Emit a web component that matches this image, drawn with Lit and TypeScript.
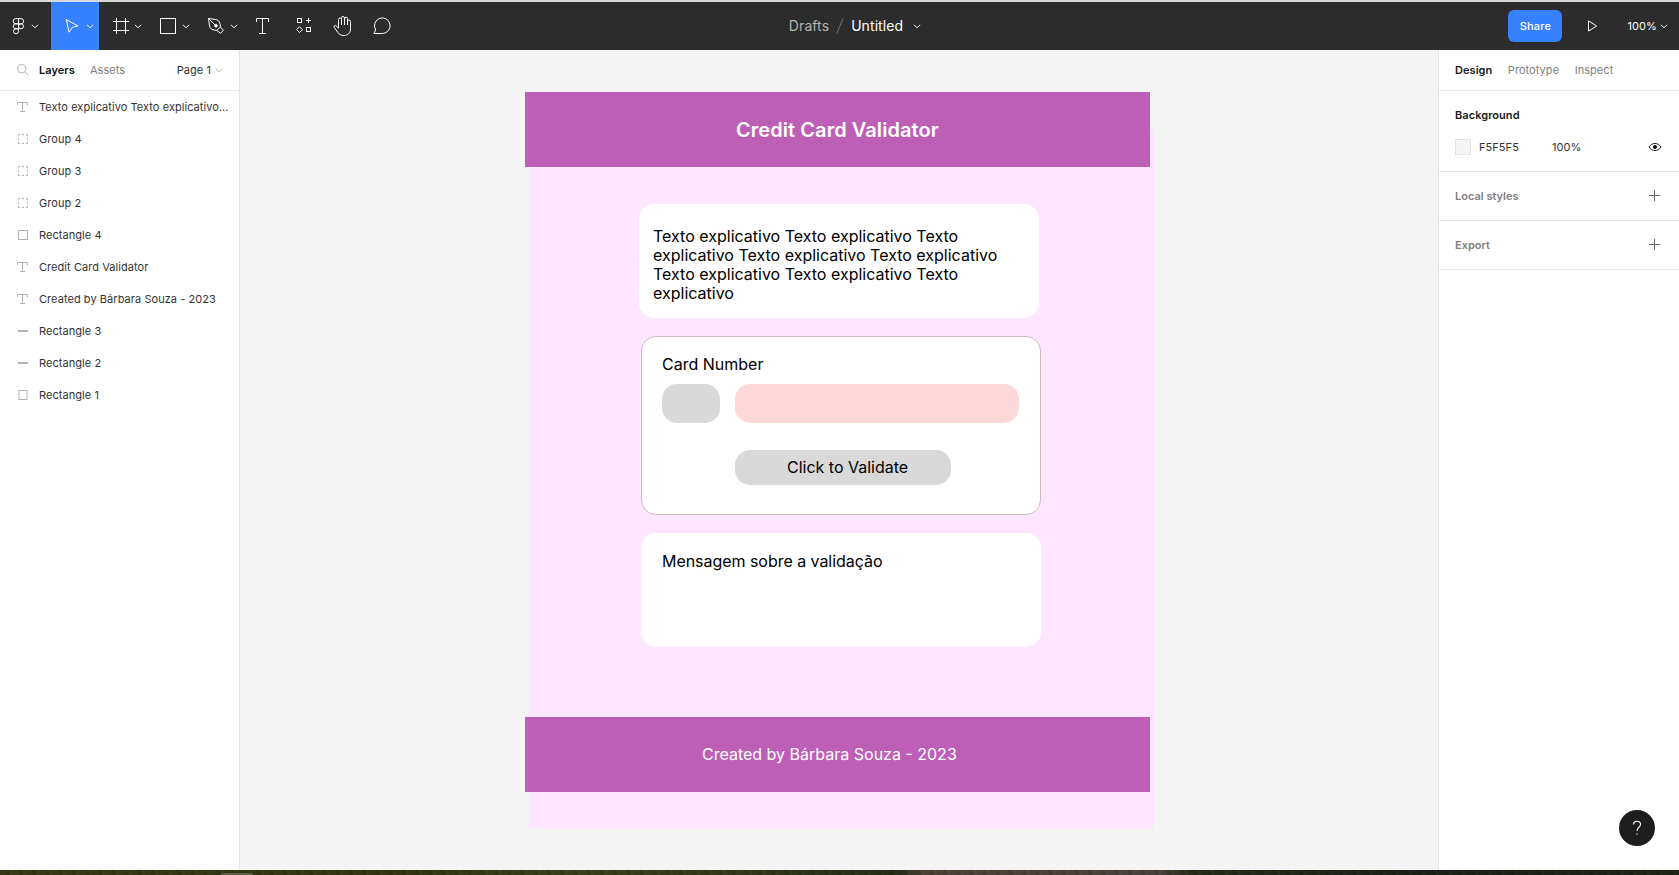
import { LitElement, html, css, svg } from "lit";
import { customElement } from "lit/decorators.js";

const chevron = (cx: number, cy = 26) =>
  svg`<path d="M${cx - 3} ${cy - 1.2}l3 3 3-3" />`;

/* Toolbar glyphs share one coordinate space; each tool shows its own slice of it. */
const TOOLS = [
  { x: 0, w: 51, name: "menu", art: svg`
    <path d="M18.5 18.6h-2.7a2.6 2.6 0 0 0 0 5.2h2.7zM18.5 18.6h2.5a2.6 2.6 0 0 1 0 5.2h-2.5zM18.5 23.8h-2.7a2.5 2.5 0 0 0 0 5h2.7zM18.5 28.8h-2.7a2.5 2.5 0 1 0 2.7 2.5z" />
    <circle cx="21" cy="26.3" r="2.5" />${chevron(35)}` },
  { x: 51, w: 48, name: "move", art: svg`
    <path d="M66.3 19.7l11.8 6.2-5.6 1.4-3.4 4.9z" />${chevron(90)}` },
  { x: 99, w: 48, name: "frame", art: svg`
    <path d="M116.5 18v16M125.5 18v16M113 21.5h16M113 30.5h16" />${chevron(138)}` },
  { x: 147, w: 48, name: "rectangle", art: svg`
    <rect x="160.5" y="18.5" width="15" height="15" />${chevron(186)}` },
  { x: 195, w: 48, name: "pen", art: svg`
    <path d="M208.5 18.5l8.3 1.2c2.4.7 3.4 3.3 3.7 7l-3.7 3.7c-3.9-.3-6.4-1.3-7.1-3.700zM208.500 18.500l6.500 6.500M220.300 27l3 3.200-2.700 3.200-3.700-2.900" />
    <circle cx="216" cy="25.800" r="1.300" fill="#fff" />${chevron(234)}` },
  { x: 243, w: 40, name: "text", art: svg`
    <path d="M256.500 22v-3.500h12V22M262.500 18.500v15M259 33.500h7" />` },
  { x: 283, w: 40, name: "resources", art: svg`
    <rect x="297.500" y="18.500" width="4" height="4" /><rect x="306.500" y="27.500" width="4" height="4" />
    <path d="M308.500 18v5M306 20.500h5M299.500 26.700l2.900 2.900-2.900 2.900-2.900-2.900z" />` },
  { x: 323, w: 40, name: "hand", art: svg`
    <path d="M341.500 25v-7a1.500 1.500 0 0 1 3 0v7M344.500 18.700a1.500 1.500 0 0 1 3 0V25M347.500 21.500a1.500 1.500 0 0 1 3 0v7.300c0 4-2.700 6.700-6.500 6.700-2.700 0-4.700-.9-6.200-3l-3.500-5.200c-.8-1.300.7-2.400 1.900-1.400l2.300 2.200v-8.600a1.500 1.500 0 0 1 3 0V25" />` },
  { x: 363, w: 40, name: "comment", art: svg`
    <path d="M373.900 33.500l1.800-3.600a7.800 7.800 0 1 1 7 3.600z" />` },
];

const LAYER_ICONS: Record<string, unknown> = {
  text: svg`<path d="M1.500 4V1.500h10V4M6.500 1.500v9M4 10.500h5" />`,
  group: svg`<path d="M2.500 3V1.500H4M10 1.500h1.500V3M11.500 9v1.500H10M4 10.500H2.500V9M6 1.500h2M6 10.500h2M2.500 5v2M11.500 5v2" />`,
  square: svg`<rect x="2.500" y="1.500" width="9" height="9" />`,
  tall: svg`<rect x="3" y="1.500" width="8" height="9" />`,
  line: svg`<path d="M2 6h10" stroke-width="2" />`,
};

const LAYERS: [string, string][] = [
  ["text", "Texto explicativo Texto explicativo..."],
  ["group", "Group 4"],
  ["group", "Group 3"],
  ["group", "Group 2"],
  ["square", "Rectangle 4"],
  ["text", "Credit Card Validator"],
  ["text", "Created by Bárbara Souza - 2023"],
  ["line", "Rectangle 3"],
  ["line", "Rectangle 2"],
  ["tall", "Rectangle 1"],
];

@customElement("tool-bar")
class ToolBar extends LitElement {
  static styles = css`
    :host { display: grid; grid-template-columns: 1fr auto 1fr; height: 48px; background: #2c2c2c; color: #fff; border-top: 2px solid #d5d9dc; }
    .tools { display: flex; }
    .active { background: #3681ff; }
    svg { fill: none; stroke: #fff; stroke-width: 1; display: block; }
    .name { display: flex; align-items: center; font-size: 14px; letter-spacing: .08px; padding: 0 0 1px 32px; }
    .drafts { color: #b3b3b3; }
    .slash { margin: 1px 7px 0 7px; stroke: #757575; }
    .chev { margin: 1px 0 0 9px; }
    .right { display: flex; align-items: center; justify-content: flex-end; font-size: 11px; }
    .share { width: 54px; height: 32px; border-radius: 6px; background: #3681ff; display: grid; place-items: center; font-weight: 500; letter-spacing: .15px; }
    .play { margin: 0 28px 0 25px; }
    .zoom { letter-spacing: .1px; margin-right: -2px; }
    .zoomchev { margin: 0 11px 0 5px; }
  `;
  render() {
    return html`
      <div class="tools">
        ${TOOLS.map((t) => html`<svg class=${t.name === "move" ? "active" : ""} width=${t.w} height="48" viewBox="${t.x} 2 ${t.w} 48">${t.art}</svg>`)}
      </div>
      <div class="name">
        <span class="drafts">Drafts</span>
        <svg class="slash" width="8" height="16" viewBox="0 0 8 16"><path d="M.8 15.500L7 .5" /></svg>
        <span>Untitled</span>
        <svg class="chev" width="10" height="8" viewBox="0 0 10 8">${chevron(5, 4)}</svg>
      </div>
      <div class="right">
        <div class="share">Share</div>
        <svg class="play" width="12" height="12" viewBox="0 0 12 12"><path d="M1.500 .9v10.200L9.600 6z" /></svg>
        <span class="zoom">100%</span>
        <svg class="zoomchev" width="8" height="8" viewBox="0 0 8 8">${chevron(4, 4)}</svg>
      </div>`;
  }
}

@customElement("layers-panel")
class LayersPanel extends LitElement {
  static styles = css`
    :host { display: flex; flex-direction: column; background: #fff; border-right: 1px solid #e5e5e5; color: #333; font-size: 11px; letter-spacing: .055px; min-width: 0; }
    .tabs { display: flex; align-items: center; height: 40px; border-bottom: 1px solid #e5e5e5; padding: 0 16px; }
    svg { fill: none; stroke: #b3b3b3; flex: none; display: block; }
    .search { margin: 0 10px 1px 1px; }
    .on { color: #111; font-weight: 600; margin-right: 15px; }
    .off { color: #808080; }
    .page { margin-left: auto; }
    .pchev { margin-left: 4px; }
    .row { display: flex; align-items: center; height: 32px; padding: 0 8px 0 16px; gap: 9px; }
    .label { white-space: nowrap; }
  `;
  render() {
    return html`
      <div class="tabs">
        <svg class="search" width="12" height="12" viewBox="0 0 12 12"><circle cx="4.700" cy="4.700" r="4.100" /><path d="M7.700 7.700l3.900 3.900" /></svg>
        <span class="on">Layers</span><span class="off">Assets</span>
        <span class="page">Page 1</span>
        <svg class="pchev" width="8" height="8" viewBox="0 0 8 8">${chevron(4, 4)}</svg>
      </div>
      ${LAYERS.map(([kind, label]) => html`
        <div class="row"><svg width="14" height="12" viewBox="0 0 14 12">${LAYER_ICONS[kind]}</svg><span class="label">${label}</span></div>`)}`;
  }
}

@customElement("design-panel")
class DesignPanel extends LitElement {
  static styles = css`
    :host { display: block; background: #fff; border-left: 1px solid #e5e5e5; color: #333; font-size: 11px; letter-spacing: .055px; }
    .tabs { display: flex; align-items: center; gap: 15.500px; height: 40px; padding-left: 16px; border-bottom: 1px solid #e5e5e5; color: #808080; }
    .on, .head { color: #1a1a1a; font-weight: 600; }
    .bg { height: 80px; border-bottom: 1px solid #e5e5e5; padding: 0 16px; display: grid; grid-template-rows: 48px 16px; align-items: center; }
    .fill { display: flex; align-items: center; }
    .swatch { width: 14px; height: 14px; border: 1px solid #e2e2e2; background: #f5f5f5; margin-right: 8px; }
    .hex { width: 73px; }
    .eye { margin-left: auto; margin-right: 1px; stroke: #1a1a1a; fill: none; }
    .section { display: flex; align-items: center; justify-content: space-between; height: 48px; padding: 0 19px 0 16px; border-bottom: 1px solid #e5e5e5; color: #808080; font-weight: 600; letter-spacing: 0; }
    .plus { stroke: #666; margin-bottom: 1px; }
  `;
  render() {
    return html`
      <div class="tabs"><span class="on">Design</span><span>Prototype</span><span>Inspect</span></div>
      <div class="bg">
        <div class="head">Background</div>
        <div class="fill">
          <div class="swatch"></div><span class="hex">F5F5F5</span><span>100%</span>
          <svg class="eye" width="14" height="10" viewBox="0 0 14 10"><path d="M1 5c2.800-4.700 9.200-4.700 12 0-2.800 4.700-9.200 4.700-12 0z" /><circle cx="7" cy="5" r="1.600" fill="#1a1a1a" /></svg>
        </div>
      </div>
      ${["Local styles", "Export"].map((s) => html`
        <div class="section">${s}<svg class="plus" width="11" height="11" viewBox="0 0 11 11"><path d="M5.500 0v11M0 5.500h11" /></svg></div>`)}`;
  }
}

@customElement("design-canvas")
class DesignCanvas extends LitElement {
  static styles = css`
    :host { display: block; position: relative; overflow: hidden; background: #f4f4f4; color: #000; font-size: 16px; line-height: 19px; }
    .node { position: absolute; box-sizing: border-box; }
    .page { left: 289px; top: 79px; width: 625px; height: 700px; background: #fde6ff; }
    .band { left: 285px; width: 625px; height: 75px; background: #be5fb7; color: #fff; display: flex; align-items: center; }
    .header { top: 42px; font-size: 20px; font-weight: 600; letter-spacing: .06px; padding: 2px 0 0 211px; }
    .footer { top: 667px; padding-left: 177px; }
    .card { width: 400px; height: 114px; background: #fff; border-radius: 15px; }
    .intro { left: 399px; top: 154px; padding: 23px 36px 0 14px; }
    .form { left: 401px; top: 286px; height: 179px; border: 1px solid #ccbcc0; padding: 18px 20px; display: grid; grid-template: 29px 66px 35px / 58px 284px; column-gap: 15px; }
    .message { left: 401px; top: 483px; padding: 19px 21px; letter-spacing: -.04px; }
    .label { grid-column: 1 / 3; }
    .brand, .number { height: 39px; border-radius: 15px; background: #d9d9d9; }
    .number { background: #ffd8d9; }
    .button { grid-column: 2; width: 216px; height: 35px; border-radius: 15px; background: #d9d9d9; display: flex; align-items: center; box-sizing: border-box; padding-left: 52px; }
  `;
  render() {
    return html`
      <div class="node page"></div>
      <div class="node band header">Credit Card Validator</div>
      <div class="node card intro">Texto explicativo Texto explicativo Texto explicativo Texto explicativo Texto explicativo Texto explicativo Texto explicativo Texto explicativo</div>
      <div class="node card form">
        <div class="label">Card Number</div>
        <div class="brand"></div><div class="number"></div>
        <div class="button">Click to Validate</div>
      </div>
      <div class="node card message">Mensagem sobre a validação</div>
      <div class="node band footer">Created by Bárbara Souza - 2023</div>`;
  }
}

@customElement("app-root")
class AppRoot extends LitElement {
  static styles = css`
    :host { display: grid; position: relative; height: 100vh; grid-template-rows: 50px 1fr 5px; font-family: Inter, "Liberation Sans", sans-serif; overflow: hidden; }
    .work { display: grid; grid-template-columns: 240px 1fr 241px; min-height: 0; }
    .desk { display: flex; align-items: flex-end; padding-left: 221px; background:
      repeating-linear-gradient(80deg, #00000000 0 5px, #00000018 7px 9px, #ffffff06 11px 13px),
      linear-gradient(90deg, #343813 0%, #30340f 24%, #393e1b 34%, #30361a 45%, #242c17 53.500%, #4b4136 55%, #49403a 69%, #252a18 71%, #1b2018 85%, #1e2416 100%); }
    .tab { width: 32px; height: 2px; border-radius: 6px 6px 0 0; background: #5c5e4a; }
    .help { position: absolute; right: 24px; bottom: 29px; width: 36px; height: 36px; border-radius: 50%; background: #1e1e1e; display: grid; place-items: center; }
    .mark { fill: none; stroke: #fff; stroke-width: 1.100; }
  `;
  render() {
    return html`
      <tool-bar></tool-bar>
      <div class="work"><layers-panel></layers-panel><design-canvas></design-canvas><design-panel></design-panel></div>
      <div class="desk"><div class="tab"></div></div>
      <div class="help"><svg class="mark" width="10" height="16" viewBox="0 0 10 16"><path d="M1.500 4.500C1.500 .2 8.500 .2 8.500 4.500c0 3-3.500 2.500-3.500 6.500M5 13.500v1.200" /></svg></div>`;
  }
}
